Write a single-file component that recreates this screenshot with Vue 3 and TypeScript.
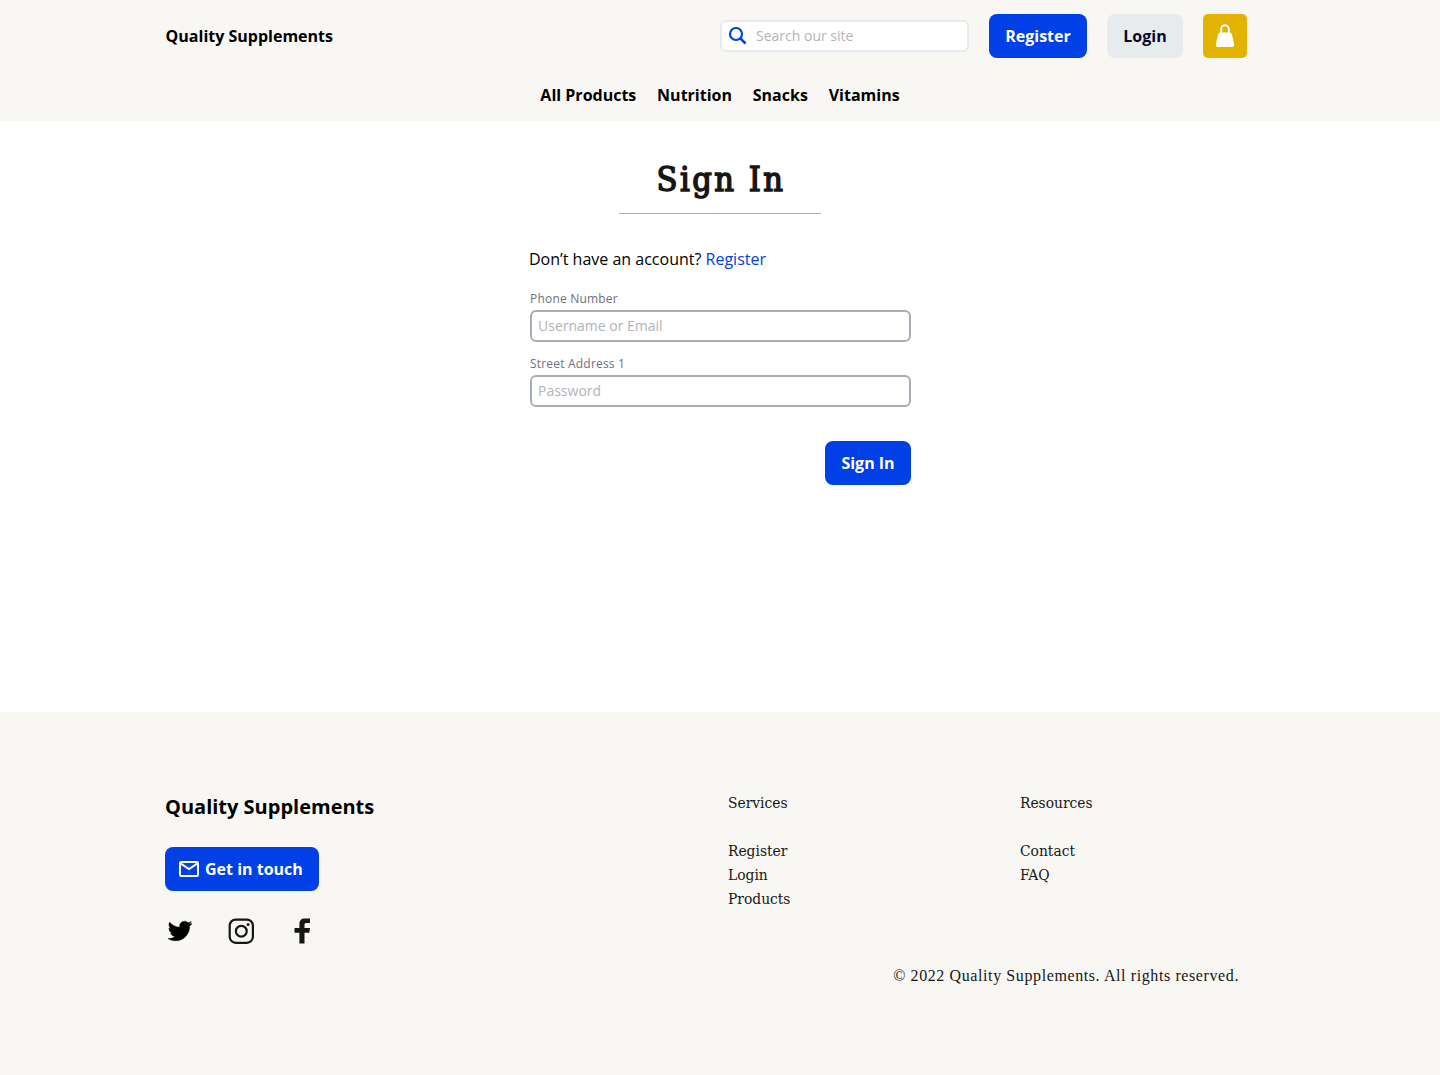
<script setup lang="ts">
interface LinkGroup {
  title: string
  links: string[]
}

interface Field {
  id: string
  label: string
  placeholder: string
  type: string
}

const categories: string[] = ['All Products', 'Nutrition', 'Snacks', 'Vitamins']

const fields: Field[] = [
  { id: 'username', label: 'Phone Number', placeholder: 'Username or Email', type: 'text' },
  { id: 'password', label: 'Street Address 1', placeholder: 'Password', type: 'password' },
]

const groups: LinkGroup[] = [
  { title: 'Services', links: ['Register', 'Login', 'Products'] },
  { title: 'Resources', links: ['Contact', 'FAQ'] },
]
</script>

<template>
  <div class="page">
    <header class="header">
      <div class="topbar">
        <a class="brand">Quality Supplements</a>
        <div class="actions">
          <label class="search">
            <svg width="20" height="20" viewBox="0 0 20 20" fill="none" stroke="#0040e6" stroke-width="2.2">
              <circle cx="8" cy="8" r="6" />
              <path d="M12.2 12.2 17.5 17.5" stroke-width="2.6" />
            </svg>
            <input type="text" placeholder="Search our site" />
          </label>
          <button class="btn primary register">Register</button>
          <button class="btn muted">Login</button>
          <button class="bag" aria-label="Bag">
            <svg width="20" height="24" viewBox="0 0 20 24" fill="none">
              <path d="M6.2 9.5V5.1a3.8 3.8 0 0 1 7.6 0v4.4" stroke="#fff" stroke-width="2" />
              <path d="M5.2 8.5h9.6q1.5 0 2 1.5l2.3 9.9q.4 3.1-2.5 3.1H3.4q-2.9 0-2.5-3.1L3.2 10q.5-1.5 2-1.5Z" fill="#fff" />
            </svg>
          </button>
        </div>
      </div>
      <nav class="nav">
        <a v-for="item in categories" :key="item">{{ item }}</a>
      </nav>
    </header>

    <main class="main">
      <h1 class="title"><span>Sign In</span></h1>
      <form class="form" @submit.prevent>
        <p class="hint">Don’t have an account? <a>Register</a></p>
        <div v-for="f in fields" :key="f.id" class="field">
          <label :for="f.id">{{ f.label }}</label>
          <input :id="f.id" :type="f.type" :placeholder="f.placeholder" />
        </div>
        <button class="btn primary submit">Sign In</button>
      </form>
    </main>

    <footer class="footer">
      <div class="columns">
        <section class="about">
          <div class="footer-brand">Quality Supplements</div>
          <button class="btn primary contact">
            <svg width="20" height="16" viewBox="0 0 20 16" fill="none" stroke="#fff" stroke-width="2">
              <rect x="1" y="1" width="18" height="14" rx="1.2" />
              <path d="M1.5 2.3 10 8l8.5-5.7" />
            </svg>
            <span>Get in touch</span>
          </button>
          <div class="social">
            <svg class="twitter" width="24" height="24" viewBox="0 0 24 24">
              <path d="M23.953 4.57a10 10 0 01-2.825.775 4.958 4.958 0 002.163-2.723c-.951.555-2.005.959-3.127 1.184a4.92 4.92 0 00-8.384 4.482C7.69 8.095 4.067 6.13 1.64 3.162a4.822 4.822 0 00-.666 2.475c0 1.71.87 3.213 2.188 4.096a4.904 4.904 0 01-2.228-.616v.06a4.923 4.923 0 003.946 4.827 4.996 4.996 0 01-2.212.085 4.936 4.936 0 004.604 3.417 9.867 9.867 0 01-6.102 2.105c-.39 0-.779-.023-1.17-.067a13.995 13.995 0 007.557 2.209c9.053 0 13.998-7.496 13.998-13.985 0-.21 0-.42-.015-.63A9.935 9.935 0 0024 4.59z" stroke="#000" stroke-width=".5" />
            </svg>
            <svg class="instagram" width="26" height="26" viewBox="0 0 26 26" fill="none" stroke="#161616">
              <rect x="1.7" y="1.6" width="23.2" height="23.2" rx="6" stroke-width="2.2" />
              <circle cx="13.3" cy="13.2" r="5.4" stroke-width="2.2" />
              <circle cx="20.1" cy="6.5" r="1.5" fill="#161616" stroke="none" />
            </svg>
            <svg width="16" height="26" viewBox="0 0 16 26" fill="#161616">
              <path d="M5.4 25.6V14.8H.5V10.1H5.4V6.3C5.4 2.2 7.4.5 10.9.5H16V5H12.4C10.9 5 10.5 5.7 10.5 7V10.1H16L15.3 14.8H10.5V25.6Z" />
            </svg>
          </div>
        </section>
        <section v-for="g in groups" :key="g.title" class="group">
          <div class="group-title">{{ g.title }}</div>
          <a v-for="l in g.links" :key="l">{{ l }}</a>
        </section>
      </div>
      <div class="copyright">© 2022 Quality Supplements. All rights reserved.</div>
    </footer>
  </div>
</template>

<style>
body {
  margin: 0;
  background: #fff;
}
</style>

<style scoped>
.page {
  display: flex;
  flex-direction: column;
  min-height: 1075px;
  font-family: 'Open Sans', sans-serif;
  font-size: 16px;
  line-height: 24px;
  color: #000;
}

.header {
  height: 121px;
  background: #f8f7f3;
}

.topbar {
  display: flex;
  align-items: center;
  justify-content: space-between;
  height: 72px;
  padding: 0 193px 0 165.6px;
}

.brand {
  font-weight: 700;
}

.actions {
  display: flex;
  align-items: center;
  gap: 20px;
}

.search {
  display: flex;
  align-items: center;
  box-sizing: border-box;
  width: 249px;
  height: 32px;
  padding-left: 6px;
  gap: 8px;
  background: #fff;
  border: 2px solid #e8ebee;
  border-radius: 6px;
}

input {
  font-family: inherit;
  font-size: 14px;
  color: #000;
}

input::placeholder {
  color: #b4b4b8;
  opacity: 1;
}

.search input {
  flex: 1;
  min-width: 0;
  padding: 0 0 2px;
  background: none;
  border: 0;
}

.btn {
  display: flex;
  align-items: center;
  justify-content: center;
  box-sizing: border-box;
  height: 44px;
  padding: 0 16px;
  font: 700 16px/24px 'Open Sans', sans-serif;
  white-space: nowrap;
  border: 0;
  border-radius: 8px;
}

.primary {
  color: #fff;
  background: #0040e6;
}

.register {
  width: 98px;
}

.muted {
  width: 76px;
  color: #07092b;
  background: #e8ebee;
}

.bag {
  display: flex;
  align-items: center;
  justify-content: center;
  width: 44px;
  height: 44px;
  padding: 0;
  background: #e4b200;
  border: 0;
  border-radius: 5px;
}

.nav {
  display: flex;
  justify-content: center;
  gap: 20.8px;
  padding-top: 11px;
  font-weight: 700;
}

.main {
  display: flex;
  flex-direction: column;
  align-items: center;
  height: 591px;
}

.title {
  box-sizing: border-box;
  width: 202px;
  height: 93px;
  margin: 0;
  padding-top: 35px;
  font: 400 34px/46px 'DejaVu Serif Condensed', 'DejaVu Serif', serif;
  letter-spacing: 2.5px;
  text-indent: 2px;
  text-align: center;
  color: #161616;
  -webkit-text-stroke: 1.5px #161616;
  border-bottom: 1px solid #aeaeb2;
}

.form {
  display: flex;
  flex-direction: column;
  width: 381px;
  padding: 33px 0 0 1px;
}

.hint {
  margin: 0 0 16px -1px;
}

.hint a {
  color: #0040e6;
}

.field {
  display: flex;
  flex-direction: column;
  height: 65px;
}

.field label {
  height: 23px;
  font-size: 12px;
  letter-spacing: 0.2px;
  color: #6f7080;
}

.field input {
  box-sizing: border-box;
  height: 32px;
  padding: 0 6px 2px;
  background: #fff;
  border: 2px solid #aaadb5;
  border-radius: 6px;
}

.submit {
  align-self: flex-end;
  width: 86px;
  margin-top: 24px;
}

.footer {
  display: flex;
  flex: 1;
  flex-direction: column;
  padding: 79px 201px 0 165px;
  background: #f8f7f3;
}

.columns {
  display: grid;
  grid-template-columns: 563px 292px 1fr;
  height: 173px;
}

.footer-brand {
  margin-bottom: 24px;
  font-size: 20px;
  font-weight: 700;
  line-height: 32px;
}

.contact {
  justify-content: flex-start;
  width: 154px;
  padding: 0 0 0 14px;
  gap: 6px;
}

.social {
  display: flex;
  align-items: center;
  height: 26px;
  margin-top: 27px;
  padding-left: 3px;
}

.twitter {
  margin-right: 36px;
}

.instagram {
  margin-right: 40px;
}

.group {
  display: flex;
  flex-direction: column;
  font-family: 'DejaVu Serif Condensed', 'DejaVu Serif', serif;
  font-size: 15.4px;
  color: #161616;
}

.group-title {
  margin-bottom: 24px;
}

.copyright {
  align-self: flex-end;
  margin-top: 0;
  font-family: 'Liberation Serif', serif;
  font-size: 16px;
  letter-spacing: 0.6px;
  white-space: nowrap;
  color: #161616;
}
</style>
